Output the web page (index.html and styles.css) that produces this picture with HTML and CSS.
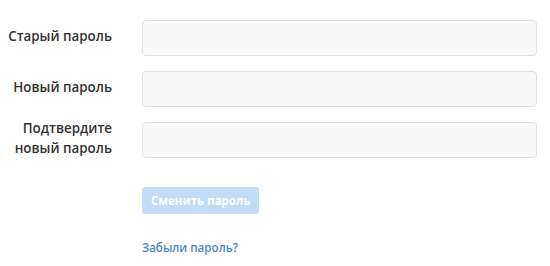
FILE: index.html
```html
<!DOCTYPE html>
<html lang="ru">
<head>
  <meta charset="UTF-8" />
  <title>Смена пароля</title>
  <meta name="viewport" content="width=device-width, initial-scale=1.0" />
  <link rel="stylesheet" href="styles.css">
</head>
<body>
  <form class="password-form" onsubmit="return false">
    <label class="form-label" for="oldPassword">Старый пароль</label>
    <input class="form-input" type="password" id="oldPassword" name="oldPassword" />

    <label class="form-label" for="newPassword">Новый пароль</label>
    <input class="form-input" type="password" id="newPassword" name="newPassword" />

    <label class="form-label" for="confirmPassword">Подтвердите<br>новый пароль</label>
    <input class="form-input" type="password" id="confirmPassword" name="confirmPassword" />

    <div class="form-actions">
      <button class="btn-submit" type="submit" disabled>Сменить пароль</button>
      <a class="forgot-link" href="#">Забыли пароль?</a>
    </div>
  </form>
</body>
</html>
```

FILE: styles.css
```css
body {
  margin: 0;
  background: #fff;
  font-family: 'Open Sans', sans-serif;
  color: #333;
}

.password-form {
  display: grid;
  grid-template-columns: 112px 395px;
  column-gap: 30px;
  row-gap: 15px;
  align-items: center;
  padding-top: 20px;
}

.form-label {
  text-align: right;
  font-size: 13.4px;
  font-weight: 600;
  line-height: 20px;
  margin-top: -4px;
}

.form-input {
  box-sizing: border-box;
  height: 36px;
  width: 100%;
  margin: 0;
  border: 1px solid #e2e2e2;
  border-radius: 4px;
  background: #f9f9f9;
  outline: none;
  font-family: inherit;
  font-size: 13px;
}

.form-actions {
  grid-column: 2;
  display: flex;
  flex-direction: column;
  align-items: flex-start;
  padding-top: 14px;
}

.btn-submit {
  height: 27px;
  padding: 0 9px;
  border: none;
  border-radius: 3px;
  background: #c0dcf7;
  color: #fff;
  font-family: inherit;
  font-size: 11.5px;
  font-weight: 700;
}

.forgot-link {
  margin-top: 26px;
  color: #4a87c8;
  font-size: 11.6px;
  font-weight: 600;
  text-decoration: none;
}
```
